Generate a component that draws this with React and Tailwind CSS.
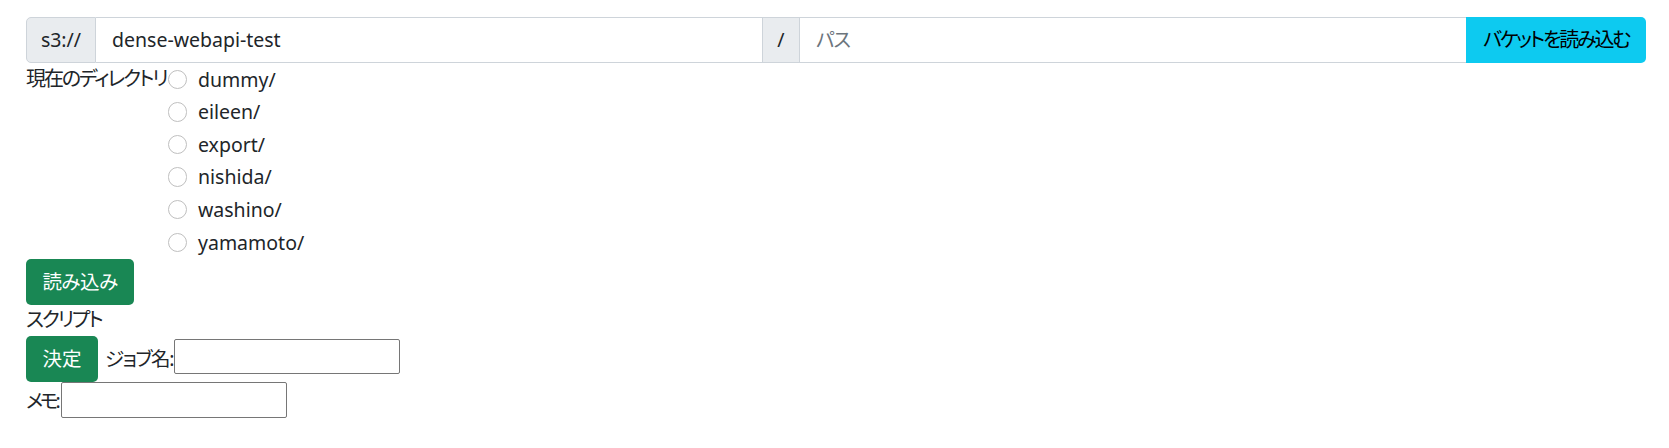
const dirs = ["dummy/", "eileen/", "export/", "nishida/", "washino/", "yamamoto/"];

export default function App() {
  return (
    <div className="min-h-screen bg-white pl-[26px] pr-[23px] pt-[17px] text-[19.5px] text-[#212529] font-['Segoe_UI','Noto_Sans','Noto_Sans_CJK_JP',sans-serif] [font-feature-settings:'palt']">
      {/* bucket / path */}
      <div className="flex h-[46px]">
        <span className="flex w-[70px] items-center justify-center rounded-l-[5px] border border-[#ced4da] bg-[#e9ecef]">s3://</span>
        <input
          className="min-w-0 flex-1 border-y border-[#ced4da] px-[16px] outline-none"
          defaultValue="dense-webapi-test"
        />
        <span className="flex w-[38px] items-center justify-center border border-[#ced4da] bg-[#e9ecef]">/</span>
        <input
          className="min-w-0 flex-1 border-y border-[#ced4da] px-[16px] tracking-[-1px] outline-none placeholder:text-[#6c757d]"
          placeholder="パス"
        />
        <button className="w-[180px] rounded-r-[5px] bg-[#0dcaf0] text-[20px] tracking-[-2.2px] text-black">バケットを読み込む</button>
      </div>

      <div className="flex items-start">
        <span className="text-[20px] leading-[32.6px] tracking-[-2.1px]">現在のディレクトリ</span>
        <div className="ml-[1px]">
          {dirs.map((d) => (
            <label key={d} className="flex h-[32.6px] items-center">
              <input
                type="radio"
                name="dir"
                className="h-[19.5px] w-[19.5px] appearance-none rounded-full border border-[#bfbfbf] bg-white"
              />
              <span className="ml-[11px]">{d}</span>
            </label>
          ))}
        </div>
      </div>

      <button className="h-[46.7px] w-[108px] rounded-[5px] bg-[#198754] tracking-[-0.5px] text-white">読み込み</button>

      <div className="text-[20px] leading-[30.3px] tracking-[-2.1px]">スクリプト</div>

      <div className="flex items-center">
        <button className="h-[46.7px] w-[72px] rounded-[5px] bg-[#198754] text-white">決定</button>
        <span className="ml-[7px]">
          <span className="tracking-[-1.5px]">ジョブ名</span>:
        </span>
        <input className="mb-[4px] h-[35px] w-[226px] rounded-[2px] border border-[#767676] px-1 outline-none" />
      </div>

      <div className="flex items-center">
        <span>
          <span className="tracking-[-3px]">メモ</span>:
        </span>
        <input className="h-[36px] w-[226px] rounded-[2px] border border-[#767676] px-1 outline-none" />
      </div>
    </div>
  );
}
